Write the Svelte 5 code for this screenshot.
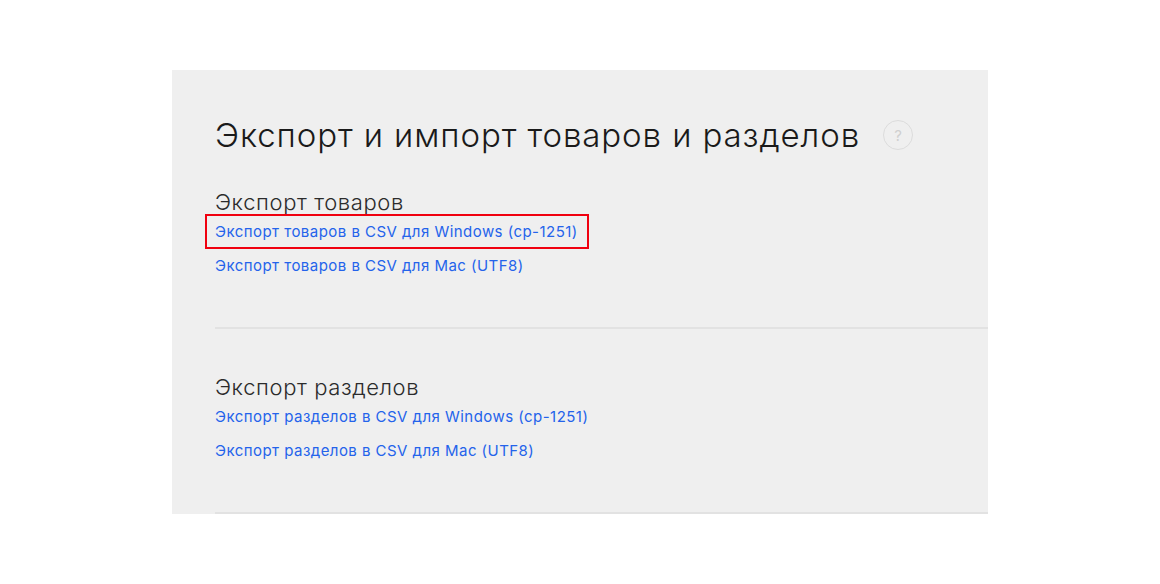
<script>
  const sections = [
    { title: 'Экспорт товаров', first: 'Экспорт товаров в CSV для Windows (cp-1251)', second: 'Экспорт товаров в CSV для Mac (UTF8)', marked: true },
    { title: 'Экспорт разделов', first: 'Экспорт разделов в CSV для Windows (cp-1251)', second: 'Экспорт разделов в CSV для Mac (UTF8)', marked: false }
  ];
</script>

<div class="page">
  <main class="panel">
    <header class="head">
      <h1>Экспорт и импорт товаров и разделов</h1>
      <span class="help">?</span>
    </header>
    {#each sections as s}
      <section class="section">
        <h2>{s.title}</h2>
        <div class="links">
          <div class="row"><a href="#a" class:marked={s.marked}>{s.first}</a></div>
          <div class="row"><a href="#b">{s.second}</a></div>
        </div>
      </section>
    {/each}
  </main>
</div>

<style>
  :global(body) { margin: 0; background: #fff; }
  .page { height: 584px; padding: 70px 172px 0; box-sizing: border-box; font-family: "Inter", "Noto Sans", sans-serif; }
  .panel { width: 816px; height: 444px; background: #efefef; padding: 43px 0 0 43px; box-sizing: border-box; }
  .head { display: flex; align-items: center; height: 44px; gap: 23px; }
  h1 { margin: 0; font-weight: 300; font-size: 33px; line-height: 44px; color: #1a1a1a; letter-spacing: 0.9px; white-space: nowrap; }
  .help { width: 28px; height: 28px; border: 1px solid #dcdcdc; border-radius: 50%; display: flex; align-items: center; justify-content: center; color: #d0d0d0; font-size: 15px; }
  .section { border-bottom: 2px solid #e2e2e2; height: 172px; box-sizing: border-box; padding-top: 32px; }
  .section + .section { padding-top: 45px; height: 185px; }
  h2 { margin: 0; font-weight: 300; font-size: 22px; line-height: 26px; color: #2b2b2b; letter-spacing: 0.6px; }
  .links { display: flex; flex-direction: column; gap: 14px; margin-top: 6px; }
  .row { height: 20px; line-height: 20px; }
  a { color: #2463eb; text-decoration: none; font-size: 15px; letter-spacing: 0.46px; font-weight: 400; position: relative; }
  a.marked::after { content: ""; position: absolute; left: -10px; right: -11px; top: -8px; bottom: -8px; border: 2px solid #f0000f; }
</style>
